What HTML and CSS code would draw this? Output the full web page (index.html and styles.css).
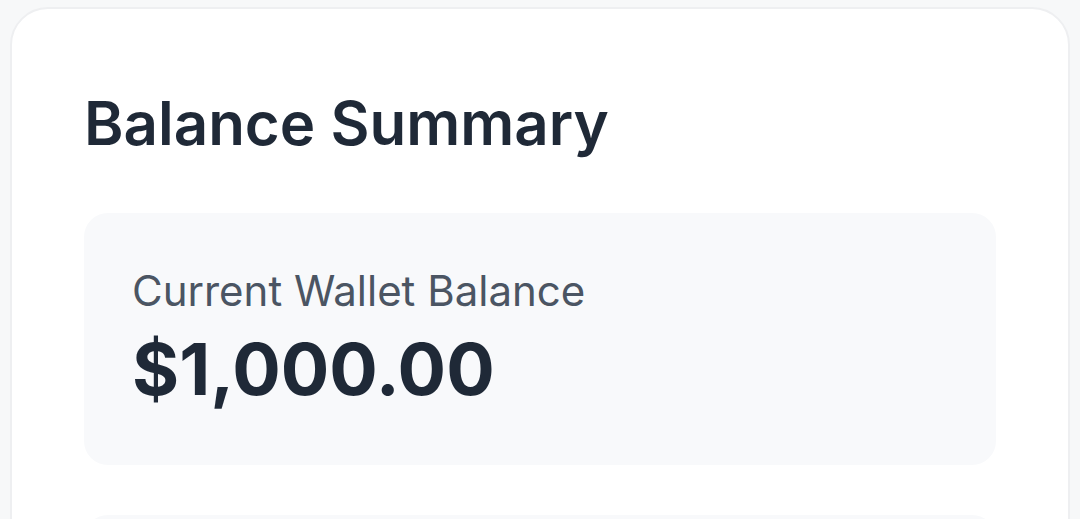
FILE: index.html
```html
<!DOCTYPE html>
<html lang="en">
<head>
    <meta charset="UTF-8">
    <title>Balance Summary</title>
    <link rel="stylesheet" href="styles.css">
</head>
<body>
<div class="page">
    <div class="card">
        <h2 class="card-title">Balance Summary</h2>
        <div class="stat-box">
            <p class="stat-label">Current Wallet Balance</p>
            <p class="stat-value">$1,000.00</p>
        </div>
        <div class="stat-box stat-box-next"></div>
    </div>
</div>
</body>
</html>
```

FILE: styles.css
```css
*{
    margin: 0;
    padding: 0;
    box-sizing: border-box;
}
body{
    background: #f7f8f9;
    font-family: Inter, "Noto Sans", sans-serif;
    color: #1f2937;
}
.page{
    padding: 7px 10px 0;
}
.card{
    background: #ffffff;
    border: 2px solid #eeeff1;
    border-radius: 38px;
    padding: 72px;
}
.card-title{
    font-size: 60px;
    line-height: 84px;
    font-weight: 600;
    color: #1f2937;
    margin-bottom: 48px;
}
.stat-box{
    background: #f8f9fb;
    border-radius: 24px;
    padding: 48px;
}
.stat-box-next{
    margin-top: 50px;
    height: 252px;
}
.stat-label{
    font-size: 42px;
    line-height: 60px;
    color: #4b5563;
}
.stat-value{
    font-size: 72px;
    line-height: 96px;
    font-weight: 700;
    color: #1f2937;
}
```
